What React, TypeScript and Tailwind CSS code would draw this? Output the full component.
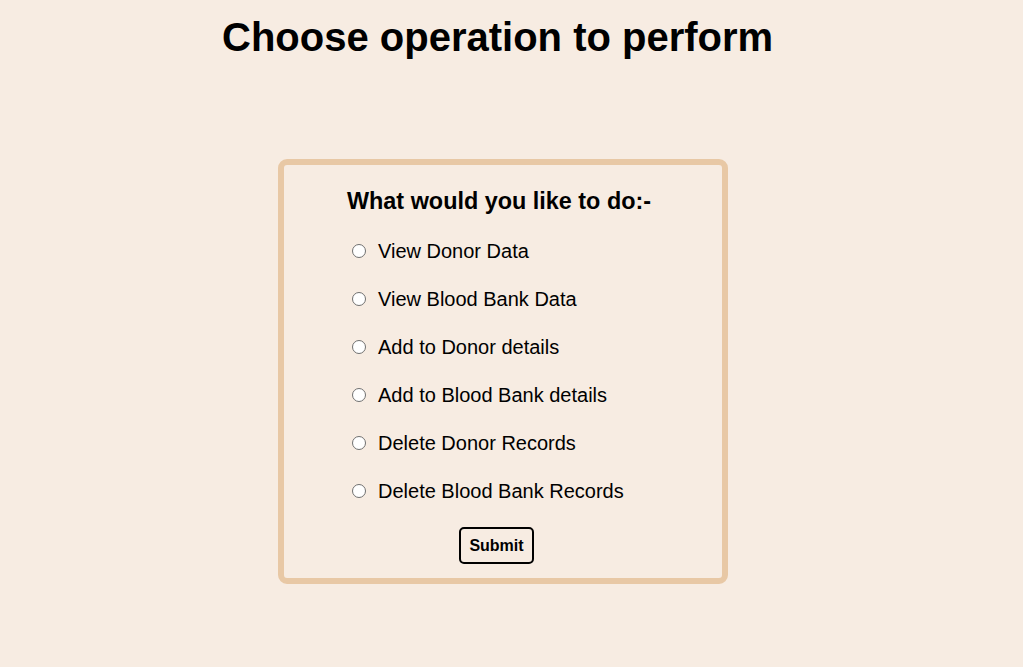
import React from "react";

const options = [
  "View Donor Data",
  "View Blood Bank Data",
  "Add to Donor details",
  "Add to Blood Bank details",
  "Delete Donor Records",
  "Delete Blood Bank Records",
];

export default function App() {
  return (
    <div
      className="min-h-[667px] w-full bg-[#f7ece2] text-black"
      style={{ fontFamily: '"Liberation Sans", Arial, sans-serif' }}
    >
      <h1 className="pl-[222px] pt-[14px] text-[40px] font-bold leading-[46px] whitespace-nowrap">
        Choose operation to perform
      </h1>
      <form
        className="ml-[278px] mt-[99px] w-[450px] rounded-[9px] border-[6px] border-[#e8c8a5] pt-[23px] pb-[14px]"
        onSubmit={(e) => e.preventDefault()}
      >
        <h3 className="pl-[63px] text-[23.4px] font-bold leading-[27px] whitespace-nowrap">
          What would you like to do:-
        </h3>
        <div className="mt-[25px] flex flex-col gap-[25px] pl-[68px]">
          {options.map((o) => (
            <label key={o} className="flex h-[23px] items-center text-[20px] leading-[23px] whitespace-nowrap">
              <input
                type="radio"
                name="op"
                className="m-0 -mt-px h-[14px] w-[14px] shrink-0 appearance-none rounded-full border-[1.5px] border-[#707070] bg-white checked:border-[4px] checked:border-[#0075ff]"
              />
              <span className="ml-[12px]">{o}</span>
            </label>
          ))}
        </div>
        <button
          type="submit"
          className="ml-[175px] mt-[24px] h-[37px] w-[75px] rounded-[5px] border-2 border-black bg-transparent text-[16px] font-bold leading-[18px]"
        >
          Submit
        </button>
      </form>
    </div>
  );
}
